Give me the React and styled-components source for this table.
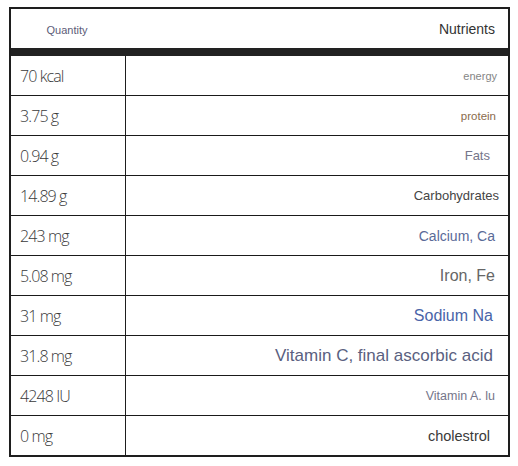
import React from "react";
import styled, { createGlobalStyle } from "styled-components";

const Global = createGlobalStyle`
  html, body { margin: 0; padding: 0; background: #fff; }
  body { font-family: "Liberation Sans", Arial, sans-serif; }
`;

const Page = styled.div`
  padding: 7px 8px 0 9px;
`;

const Table = styled.div`
  width: 501px;
  box-sizing: border-box;
  border: 2px solid #1e1e1e;
  display: flex;
  flex-direction: column;
`;

const Header = styled.div`
  display: grid;
  grid-template-columns: 115px 1fr;
  height: 39px;
  border-bottom: 8px solid #222;
  align-items: center;
`;

const HeadQty = styled.div`
  text-align: center;
  font-size: 11px;
  color: #5c5c78;
  padding-top: 2px;
  padding-right: 3px;
`;

const HeadName = styled.div`
  text-align: right;
  font-size: 14px;
  color: #333;
  padding-right: 13px;
`;

const Row = styled.div`
  display: grid;
  grid-template-columns: 115px 1fr;
  box-sizing: border-box;
  border-bottom: ${(p) => (p.$last ? "none" : "1px solid #1a1a1a")};
  height: ${(p) => (p.$last ? "39px" : "40px")};
`;

const Qty = styled.div`
  display: flex;
  align-items: center;
  padding-left: 9px;
  border-right: 1px solid #1e1e1e;
  font-family: "Open Sans", sans-serif;
  font-weight: 300;
  font-size: 16px;
  letter-spacing: -0.9px;
  color: #3a3a3a;
`;

const Name = styled.div`
  display: flex;
  align-items: center;
  justify-content: flex-end;
  padding-right: ${(p) => p.$pr ?? 13}px;
  font-size: ${(p) => p.$size}px;
  color: ${(p) => p.$color};
`;

const rows = [
  ["70 kcal", "energy", 11, "#858585", 11],
  ["3.75 g", "protein", 11.5, "#8a6b4c", 12],
  ["0.94 g", "Fats", 13, "#75758a", 18],
  ["14.89 g", "Carbohydrates", 13, "#454545", 9],
  ["243 mg", "Calcium, Ca", 14, "#5a6a98", 13],
  ["5.08 mg", "Iron, Fe", 16, "#666", 13],
  ["31 mg", "Sodium Na", 16, "#4a64a8", 15],
  ["31.8 mg", "Vitamin C, final ascorbic acid", 17, "#5a5f80", 15],
  ["4248 IU", "Vitamin A. lu", 12.5, "#75758a", 13],
  ["0 mg", "cholestrol", 14.5, "#3a3a3a", 18],
];

export default function App() {
  return (
    <Page>
      <Global />
      <Table>
        <Header>
          <HeadQty>Quantity</HeadQty>
          <HeadName>Nutrients</HeadName>
        </Header>
        {rows.map(([q, n, size, color, pr], i) => (
          <Row key={n} $last={i === rows.length - 1}>
            <Qty>{q}</Qty>
            <Name $size={size} $color={color} $pr={pr}>
              {n}
            </Name>
          </Row>
        ))}
      </Table>
    </Page>
  );
}
